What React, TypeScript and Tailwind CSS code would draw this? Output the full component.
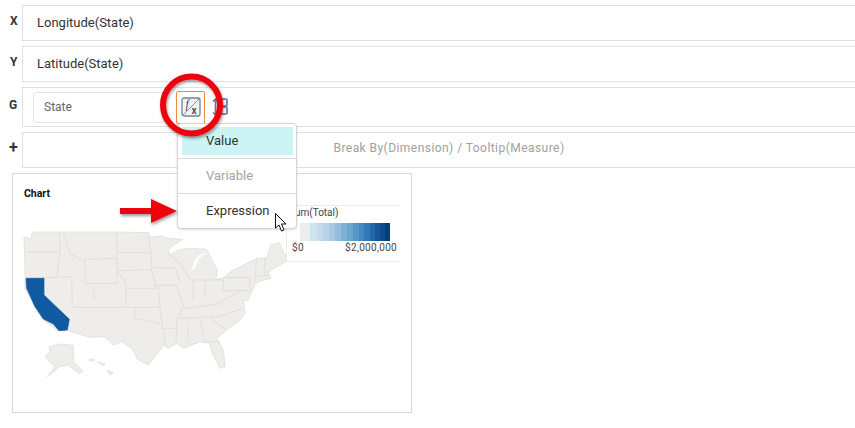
const font = { fontFamily: "Roboto, sans-serif" };

const legendCells = [
  "w-[8px] bg-[#efedea]",
  "w-[2px] bg-[#dff3f3]",
  "w-[7px] bg-[#cfe4f0]",
  "w-[6px] bg-[#c6dcee]",
  "w-[6px] bg-[#b8d3e8]",
  "w-[6px] bg-[#a6cae1]",
  "w-[6px] bg-[#93bddc]",
  "w-[6px] bg-[#7fb1d6]",
  "w-[6px] bg-[#6aa6cf]",
  "w-[6px] bg-[#5499c8]",
  "w-[5px] bg-[#4089c1]",
  "w-[6px] bg-[#2f7ab7]",
  "w-[5px] bg-[#2368ab]",
  "w-[5px] bg-[#17589c]",
  "w-[5px] bg-[#0e4a8e]",
  "w-[5px] bg-[#083b7e]",
];

const borders = [
  "M50,95 L148,95",
  "M148,36 L150,95 L140,170",
  "M48,175 L185,170",
  "M160,36 L180,100 L222,125",
  "M222,118 L320,115",
  "M225,118 L225,190 L320,190 L322,115",
  "M320,36 L322,152",
  "M322,98 L420,98",
  "M322,152 L425,150",
  "M322,152 L347,190 L347,260",
  "M347,205 L445,205 L450,262",
  "M415,38 L422,98 L425,150 L440,205",
  "M185,170 L187,262",
  "M252,210 L252,240",
  "M187,262 L450,262",
  "M375,262 L375,295 L450,310",
  "M450,262 L457,325 L500,325",
  "M425,143 L495,143 L510,185",
  "M432,196 L500,196",
  "M500,196 L520,258 L505,295",
  "M460,325 L465,375",
  "M505,295 L625,290",
  "M500,295 L498,370",
  "M535,308 L535,365",
  "M570,295 L582,365 L630,365",
  "M525,265 L640,250",
  "M475,100 L510,130 L540,180",
  "M550,180 L550,240",
  "M585,180 L585,235",
  "M550,180 L640,180",
  "M640,172 L720,172 L720,212 L640,212 L640,172",
  "M610,255 L690,215",
  "M625,290 L700,265",
  "M600,295 L650,330",
  "M740,115 L735,185",
  "M735,170 L780,165",
  "M765,110 L762,165",
];

const UsMap = () => (
  <svg width="280" height="170" viewBox="0 0 840 510" className="block">
    <g fill="#efedea" stroke="#e4e3e0" strokeWidth="3" strokeLinejoin="round">
      <path d="M42,50 L62,58 L68,36 L145,36 L320,36 L415,38 L418,52 L450,48 L475,55 L518,58 L490,75 L475,90 L478,105 L510,88 L545,85 L590,88 L608,125 L622,150 L620,170 L605,178 L640,175 L660,155 L700,135 L740,115 L770,115 L782,75 L808,68 L822,100 L838,120 L800,140 L775,155 L782,175 L745,185 L735,195 L720,225 L715,240 L700,240 L705,280 L690,300 L650,330 L620,355 L640,390 L645,440 L630,445 L605,395 L600,370 L570,365 L520,385 L500,370 L475,385 L462,375 L415,435 L385,420 L365,385 L335,365 L310,375 L285,350 L240,352 L175,332 L145,332 L100,300 L75,260 L45,205 L45,150 Z" />
      <path d="M118,380 L150,372 L190,376 L190,425 L220,455 L205,460 L175,435 L150,440 L112,470 L135,440 L105,410 L120,395 Z" />
      <path d="M236,420 L250,416 L250,424 Z" />
      <path d="M262,426 L285,432 L282,438 Z" />
      <path d="M292,452 L310,458 L300,466 Z" />
    </g>
    <g fill="none" stroke="#e1e1de" strokeWidth="3.5">
      {borders.map((d, i) => (
        <path key={i} d={d} />
      ))}
    </g>
    <path d="M594,96 L566,106 L552,126 L544,152 L556,142 L566,116 Z" fill="#fff" />
    <path
      d="M48,175 L102,175 L102,225 L178,298 L172,330 L147,332 L130,312 L100,297 L75,260 L50,205 Z"
      fill="#0f5aa0"
      stroke="#0f5aa0"
      strokeWidth="2"
    />
  </svg>
);

const FxIcon = () => (
  <svg width="20" height="20" viewBox="0 0 20 20">
    <rect x="1" y="1" width="18" height="18" rx="2" fill="#f1f4f6" stroke="#76828f" strokeWidth="1.3" />
    <path d="M2,18 L18,2" stroke="#8a95a1" strokeWidth="1" />
    <text x="4.5" y="10.5" fontSize="12" fontStyle="italic" fontFamily="Liberation Serif, serif" fill="#3f4a58">
      f
    </text>
    <text x="10.5" y="17" fontSize="10" fontWeight="700" fontFamily="Roboto, sans-serif" fill="#4d5968">
      x
    </text>
  </svg>
);

const SortIcon = () => (
  <svg width="16" height="18" viewBox="0 0 16 18">
    <path d="M3.5,1 L3.5,17 M1,3.5 L3.5,1 L6,3.5 M1,14.5 L3.5,17 L6,14.5" fill="none" stroke="#6f7c8c" strokeWidth="1.7" />
    <rect x="9.5" y="1" width="5.5" height="7" rx="1" fill="none" stroke="#5a6fa0" strokeWidth="1.6" />
    <rect x="9.5" y="9" width="5.5" height="7" rx="1" fill="none" stroke="#5a6fa0" strokeWidth="1.6" />
  </svg>
);

type RowProps = { label: string; className: string; labelClass: string; children: React.ReactNode };

const Row = ({ label, className, labelClass, children }: RowProps) => (
  <div className={`flex ${className}`}>
    <div className={`w-[22px] shrink-0 font-bold text-[#333] ${labelClass}`}>{label}</div>
    <div className="flex-1 flex items-center -mr-[3px] border border-[#e0e0e0]">{children}</div>
  </div>
);

export default function App() {
  return (
    <div style={font} className="relative w-[855px] h-[428px] overflow-hidden bg-white pt-[5px]">
      <div className="flex flex-col gap-[5px]">
        <Row label="X" className="h-[36px]" labelClass="pl-[10px] pt-[8px] text-[12px] leading-[16px]">
          <span className="pl-[14px] text-[13px] text-[#333]">Longitude(State)</span>
        </Row>
        <Row label="Y" className="h-[36px]" labelClass="pl-[10px] pt-[8px] text-[12px] leading-[16px]">
          <span className="pl-[14px] text-[13px] text-[#333]">Latitude(State)</span>
        </Row>
        <Row label="G" className="h-[40px]" labelClass="pl-[9px] pt-[10px] text-[12px] leading-[16px]">
          <div className="ml-[10px] w-[132px] h-[31px] flex items-center pl-[10px] border border-[#e4e4e4] rounded-[4px] text-[12px] text-[#666]">
            State
          </div>
          <div className="ml-[11px] w-[29px] h-[33px] flex items-center justify-center border border-[#f08a3c] rounded-[2px] bg-white">
            <FxIcon />
          </div>
          <div className="ml-[7px]">
            <SortIcon />
          </div>
        </Row>
        <Row label="+" className="h-[36px]" labelClass="pl-[9px] pt-[6px] text-[16px] leading-[20px]">
          <span className="w-full text-center pl-[18px] pb-[5px] text-[12px] tracking-[0.45px] text-[#a0a0a0]">
            Break By(Dimension) / Tooltip(Measure)
          </span>
        </Row>
      </div>

      <div className="ml-[12px] mt-[5px] w-[400px] h-[240px] border border-[#d8d8d8] pl-[11px] pt-[14px]">
        <div className="text-[10.5px] leading-[12px] font-bold text-[#111]">Chart</div>
        <div className="-ml-[14px] mt-[20px]">
          <UsMap />
        </div>
      </div>

      {/* legend */}
      <div className="absolute left-[286px] top-[205px] w-[114px] h-[57px] border-t border-b border-l border-[#ececec] bg-white">
        <div className="pl-[2px] text-[10px] leading-[13px] text-[#444]">Sum(Total)</div>
        <div className="ml-[13px] mt-[4px] flex h-[18px] w-[90px]">
          {legendCells.map((c) => (
            <div key={c} className={c} />
          ))}
        </div>
        <div className="flex justify-between pl-[5px] pr-[3px] text-[10px] tracking-[0.3px] leading-[13px] text-[#444]">
          <span>$0</span>
          <span>$2,000,000</span>
        </div>
      </div>

      {/* dropdown */}
      <div className="absolute left-[177px] top-[123px] w-[120px] h-[106px] bg-white border border-[#d4d4d4] rounded-[4px] shadow-sm text-[13px]">
        <div className="ml-[4px] mr-[3px] mt-[3px] h-[28px] flex items-center pl-[24px] bg-[#ccf4f4] text-[#333]">Value</div>
        <div className="mt-[3px] border-t border-[#dcdcdc] h-[35px] flex items-center pl-[28px] text-[#a4a4a4]">Variable</div>
        <div className="border-t border-[#dcdcdc] h-[35px] flex items-center pl-[28px] text-[#333]">Expression</div>
      </div>

      {/* callouts */}
      <svg className="absolute left-0 top-0 pointer-events-none" width="855" height="428" viewBox="0 0 855 428">
        <defs>
          <filter id="soft" x="-30%" y="-30%" width="160%" height="160%">
            <feDropShadow dx="1" dy="2" stdDeviation="1.5" floodColor="#000" floodOpacity="0.4" />
          </filter>
        </defs>
        <circle cx="191.5" cy="105" r="28.5" fill="none" stroke="#ee0008" strokeWidth="6" filter="url(#soft)" />
        <path d="M120,208 L151,208 L151,199 L177,211 L151,223 L151,214 L120,214 Z" fill="#ee0008" filter="url(#soft)" />
        <path
          d="M275.5,213.5 L275.5,228 L279,225 L281.5,231 L284,230 L281.5,224 L286,224 Z"
          fill="#fff"
          stroke="#111"
          strokeWidth="1"
          strokeLinejoin="round"
        />
      </svg>
    </div>
  );
}
